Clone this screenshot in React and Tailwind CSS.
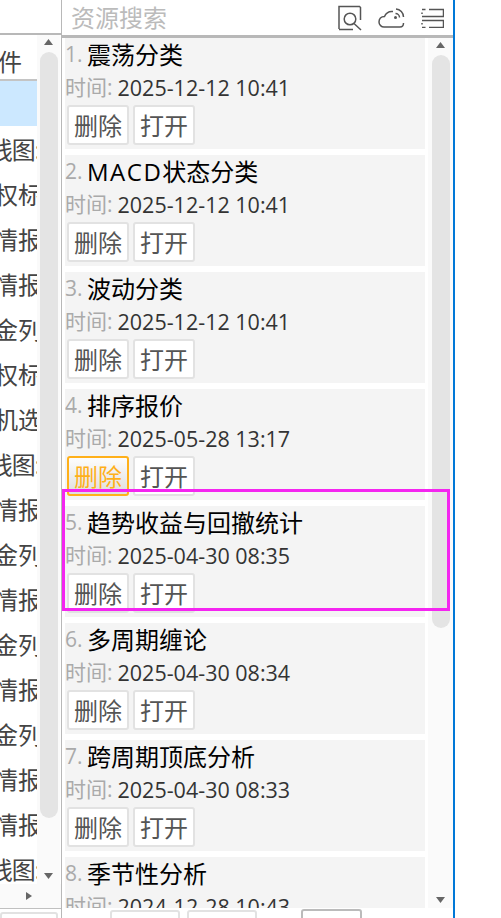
import React from "react";

const font = "[font-family:'Open_Sans','Noto_Sans_CJK_SC',sans-serif]";

const leftRows = ["线图:", "权标", "情报", "情报", "金列", "权标", "机选", "线图:", "情报", "金列", "情报", "金列", "情报", "金列", "情报", "情报", "线图:"];

const resources = [
  { title: "震荡分类", time: "2025-12-12 10:41" },
  { prefix: "MACD", title: "状态分类", time: "2025-12-12 10:41" },
  { title: "波动分类", time: "2025-12-12 10:41" },
  { title: "排序报价", time: "2025-05-28 13:17", hover: true },
  { title: "趋势收益与回撤统计", time: "2025-04-30 08:35" },
  { title: "多周期缠论", time: "2025-04-30 08:34" },
  { title: "跨周期顶底分析", time: "2025-04-30 08:33" },
  { title: "季节性分析", time: "2024-12-28 10:43" },
];

const Arrow = ({ dir }) => {
  const points = {
    up: "4.500,0 9,6 0,6",
    down: "0,0 9,0 4.500,6",
    right: "0,0 6,4 0,8",
  };
  return (
    <svg width={dir === "right" ? 6 : 9} height={dir === "right" ? 8 : 6} className="shrink-0">
      <polygon points={points[dir]} fill="#666" />
    </svg>
  );
};

const ScrollTrack = ({ className, thumb, gap }) => (
  <div className={`flex flex-col items-center bg-[#fafafa] ${className}`}>
    <div className="mt-[4px] flex h-[6px] items-center">
      <Arrow dir="up" />
    </div>
    <div className={`w-[18px] shrink-0 rounded-[9px] bg-[#e4e4e4] ${gap} ${thumb}`} />
    <div className="mt-auto mb-[5px] flex h-[6px] items-center">
      <Arrow dir="down" />
    </div>
  </div>
);

const ResourceCard = ({ index, prefix, title, time, hover }) => (
  <div className="h-[111px] shrink-0 overflow-hidden bg-[#f4f4f4]">
    <div className="flex h-[33px] items-center whitespace-nowrap">
      <span className="w-[22px] text-[21px] text-[#aaa]">{index}.</span>
      {prefix && <span className="text-[24px] tracking-[1.5px] text-black">{prefix}</span>}
      <span className="text-[24px] text-black">{title}</span>
    </div>
    <div className="mt-[1px] flex h-[32px] items-center whitespace-nowrap">
      <span className="text-[21px] text-[#aaa]">时间:</span>
      <span className="ml-[5px] text-[21.5px] text-[#333]">{time}</span>
    </div>
    <div className="mt-[1px] flex gap-[4px] pl-[2px]">
      <button
        className={`h-[40px] w-[62px] rounded-[3px] border-2 pt-[1px] text-[24px] ${
          hover
            ? "border-[#ffb01a] bg-gradient-to-b from-[#fdfdfd] to-[#dedede] text-[#ffb01a]"
            : "border-[#e2e2e2] bg-white text-[#555]"
        }`}
      >
        删除
      </button>
      <button className="h-[40px] w-[62px] rounded-[3px] border-2 border-[#e2e2e2] bg-white pt-[1px] text-[24px] text-[#555]">
        打开
      </button>
    </div>
  </div>
);

const App = () => {
  return (
    <div className={`relative flex h-[918px] w-[501px] overflow-hidden bg-white ${font}`}>
      {/* left list, cut off by the window */}
      <div className="flex h-full w-[61px] shrink-0 flex-col">
        <div className="h-[35px] shrink-0 border-b-2 border-[#b8b8b8]" />
        <div className="flex h-[849px] shrink-0">
          <div className="w-[37px] shrink-0 overflow-hidden">
            <div className="flex h-[46px] items-center border-b-2 border-[#c4c4c4] pt-[9px] text-[24px] text-[#444]">
              <span className="-ml-[2px]">件</span>
            </div>
            <div className="h-[45px] bg-[#cce8ff]" />
            <div className="pt-[1px]">
              {leftRows.map((label, i) => (
                <div key={i} className="flex h-[45px] items-center justify-end whitespace-nowrap text-[24px] text-[#444]">
                  <span className={label.length > 2 ? "-mr-[3px] tracking-[-1px]" : "-mr-[5px]"}>{label}</span>
                </div>
              ))}
            </div>
          </div>
          <ScrollTrack className="w-[23px] shrink-0" gap="mt-[7px]" thumb="h-[766px]" />
          <div className="w-px shrink-0" />
        </div>
        <div className="flex h-[24px] shrink-0 items-center bg-[#fafafa] pl-[26px]">
          <Arrow dir="right" />
        </div>
        <div className="flex-1 border-t border-[#c0c0c0] bg-white">
          <div className="mt-[3px] h-full w-[58px] rounded-t-[3px] border-2 border-[#e2e2e2]" />
        </div>
      </div>

      {/* resource panel */}
      <div className="flex h-full w-[394px] shrink-0 flex-col border-r-2 border-l border-l-[#b8b8b8] border-r-[#0078d7]">
        <div className="flex h-[35px] shrink-0 items-center justify-between pr-[9px] pl-[9px]">
          <span className="text-[24px] text-[#bbb]">资源搜索</span>
          <div className="flex items-center gap-[16px] text-[#555]">
            <svg width="24" height="26" viewBox="0 0 24 26" fill="none" stroke="currentColor" strokeWidth="1.500">
              <path d="M1 24V1.500h20.500l1 1V15M1 24.500h14" />
              <circle cx="12" cy="14" r="5.800" />
              <path d="M16 18.500l7 6.500" />
            </svg>
            <svg width="27" height="20" viewBox="0 0 27 20" fill="none" stroke="currentColor" strokeWidth="1.500">
              <path d="M15 3.500C11 3 8 5 6.500 8.500 3 8.500 1 11 1 14c0 3 2.500 5 5 5h16c2.500 0 3.500-2 3.500-4" />
              <circle cx="17.500" cy="9.500" r="1.500" fill="currentColor" stroke="none" />
              <path d="M17.500 5.500a4 4 0 0 1 4 4" />
              <path d="M18 1a8 8 0 0 1 7.500 8" />
            </svg>
            <svg width="23" height="20" viewBox="0 0 23 20" fill="none" stroke="currentColor" strokeWidth="1.500">
              <path d="M1 1.500h3.500M8 1.500h14.500V8.500H1M1 12.500h21.500v7H8M4.500 19.500H1" />
              <path d="M1 4.500v1.500M1 15v1.500" />
            </svg>
          </div>
        </div>
        <div className="flex min-h-0 flex-1 flex-col">
          <div className="flex h-[873px] shrink-0 border-t-[3px] border-[#b8b8b8]">
            <div className="flex min-w-0 flex-1 flex-col gap-[6px] overflow-hidden pl-[3px]">
              {resources.map((item, i) => (
                <ResourceCard key={item.title} index={i + 1} {...item} />
              ))}
            </div>
            <ScrollTrack className="ml-[3px] w-[25px] shrink-0" gap="mt-[7px]" thumb="h-[573px]" />
          </div>
          <div className="flex flex-1 items-start bg-white">
            <div className="mt-[2px] ml-[48px] h-[12px] w-[70px] rounded-t-[3px] border-2 border-[#e2e2e2]" />
            <div className="mt-[2px] ml-[7px] h-[12px] w-[70px] rounded-t-[3px] border-2 border-[#e2e2e2]" />
            <div className="mt-[1px] ml-[44px] h-[12px] w-[61px] rounded-t-[3px] border-2 border-[#bbb]" />
          </div>
        </div>
      </div>

      {/* highlight frame drawn over the page */}
      <div className="absolute top-[489px] left-[62px] h-[122px] w-[388px] border-[3px] border-[#f425f0]" />
    </div>
  );
};

export default App;
